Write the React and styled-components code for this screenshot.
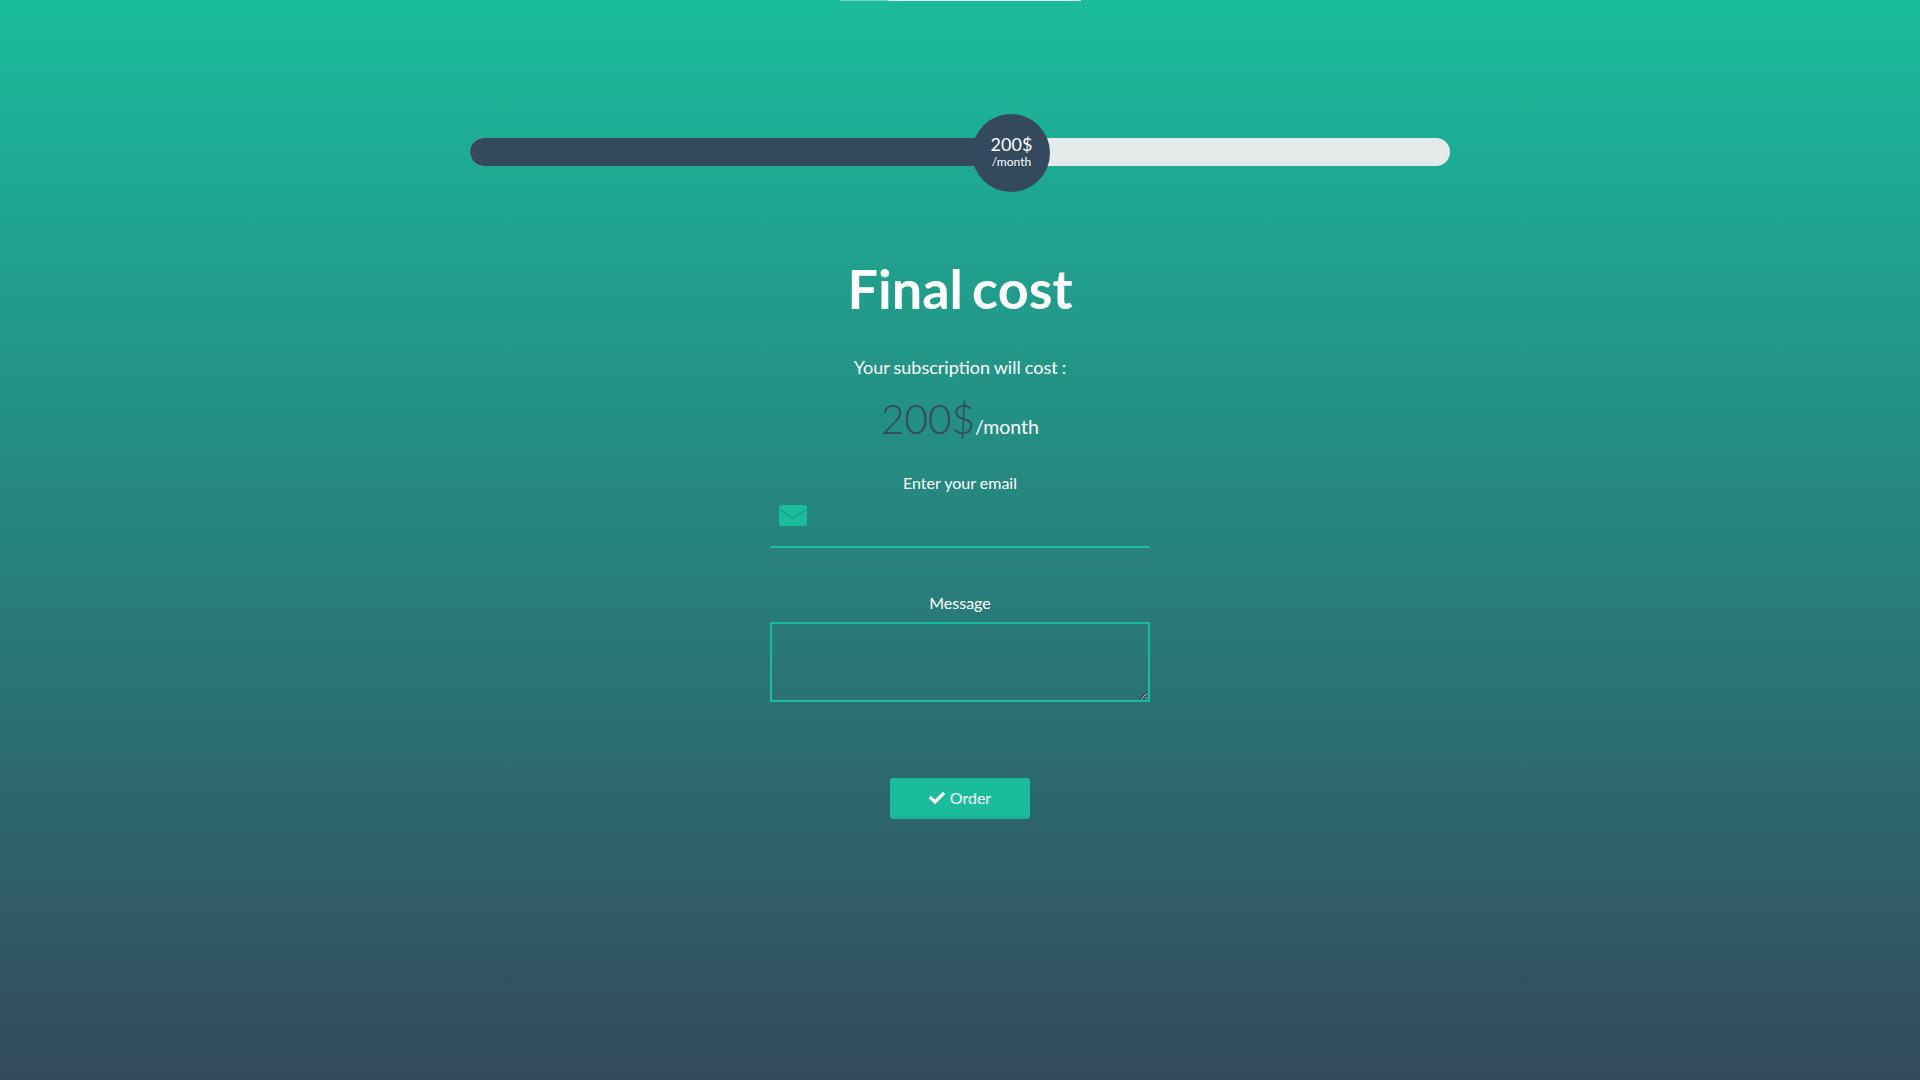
import React from "react";
import styled, { createGlobalStyle } from "styled-components";
import { FaCheck } from "react-icons/fa";

const Global = createGlobalStyle`
  html, body { margin: 0; padding: 0; height: 100%; }
  body { font-family: Lato, "Open Sans", sans-serif; color: #fff; }
  * { box-sizing: border-box; }
`;

const Page = styled.main`
  height: 1080px;
  overflow: hidden;
  background: linear-gradient(180deg, #1abc9c 0%, #34495e 100%);
  display: flex;
  flex-direction: column;
  align-items: center;
`;

const TopRule = styled.div`
  width: 241px;
  height: 1px;
  display: flex;
`;

const TopRuleDone = styled.span`
  width: 48px;
  background: rgba(255, 255, 255, 0.4);
`;

const TopRuleRest = styled.span`
  flex: 1;
  background: #e6fbf6;
`;

const SliderBlock = styled.section`
  width: 980px;
  margin-top: 137px;
  position: relative;
`;

const Track = styled.div`
  height: 28px;
  border-radius: 14px;
  background: #e4e9ea;
  overflow: hidden;
`;

const Fill = styled.div`
  height: 100%;
  background: #34495e;
`;

const Thumb = styled.div`
  position: absolute;
  top: -24px;
  width: 78px;
  height: 78px;
  margin-left: -38.5px;
  border-radius: 50%;
  background: #34495e;
  display: flex;
  flex-direction: column;
  align-items: center;
  justify-content: center;
`;

const ThumbPrice = styled.span`
  font-size: 18px;
  line-height: 20px;
  margin-top: -3px;
`;

const ThumbUnit = styled.span`
  font-size: 12px;
  line-height: 15px;
`;

const Title = styled.h1`
  margin: 90px 0 0;
  font-size: 54px;
  line-height: 66px;
  font-weight: 700;
  word-spacing: -4px;
  text-align: center;
`;

const Lead = styled.p`
  margin: 33px 0 0;
  font-size: 18px;
  line-height: 24px;
  word-spacing: -0.5px;
`;

const Price = styled.div`
  margin-top: 14px;
  height: 52px;
  display: flex;
  align-items: baseline;
`;

const Amount = styled.span`
  font-size: 40.5px;
  line-height: 52px;
  font-weight: 300;
  color: #34495e;
`;

const Unit = styled.span`
  font-size: 19.5px;
`;

const Form = styled.form`
  width: 380px;
  display: flex;
  flex-direction: column;
  align-items: center;
  margin-top: 27px;
`;

const FieldLabel = styled.label`
  font-size: 16px;
  line-height: 22px;
  text-align: center;
`;

const EmailField = styled.div`
  width: 100%;
  height: 52px;
  margin-top: 2px;
  padding: 0 9px;
  display: flex;
  align-items: center;
  gap: 12px;
  border-bottom: 2px solid #1abc9c;
`;

const EnvelopeIcon = styled.svg`
  width: 28px;
  height: 22px;
  flex: none;
  margin-top: -11px;
`;

const EmailInput = styled.input`
  flex: 1;
  min-width: 0;
  height: 100%;
  border: 0;
  outline: 0;
  background: transparent;
  color: #fff;
  font: inherit;
`;

const MessageLabel = styled(FieldLabel)`
  margin-top: 44px;
`;

const MessageBox = styled.textarea`
  display: block;
  width: 100%;
  height: 80px;
  margin-top: 8px;
  border: 2px solid #1abc9c;
  border-radius: 0;
  outline: 0;
  background: transparent;
  color: #fff;
  font: inherit;
  resize: both;
`;

const OrderButton = styled.button`
  width: 140px;
  height: 41px;
  margin-top: 76px;
  border: 0;
  border-bottom: 3px solid #1ab093;
  border-radius: 3px;
  background: #1abc9c;
  color: #fff;
  font-family: inherit;
  font-size: 16px;
  display: flex;
  align-items: center;
  justify-content: center;
  gap: 5px;
`;

const CheckIcon = styled(FaCheck)`
  width: 16px;
  height: 16px;
  margin-top: 2px;
`;

const VALUE_RATIO = 0.552;

export default function App() {
  const percent = `${VALUE_RATIO * 100}%`;
  return (
    <>
      <Global />
      <Page>
        <TopRule>
          <TopRuleDone />
          <TopRuleRest />
        </TopRule>
        <SliderBlock>
          <Track>
            <Fill style={{ width: percent }} />
          </Track>
          <Thumb style={{ left: percent }}>
            <ThumbPrice>200$</ThumbPrice>
            <ThumbUnit>/month</ThumbUnit>
          </Thumb>
        </SliderBlock>
        <Title>Final cost</Title>
        <Lead>Your subscription will cost :</Lead>
        <Price>
          <Amount>200$</Amount>
          <Unit>/month</Unit>
        </Price>
        <Form onSubmit={(e) => e.preventDefault()}>
          <FieldLabel htmlFor="email">Enter your email</FieldLabel>
          <EmailField>
            <EnvelopeIcon viewBox="0 0 28 22" aria-hidden="true">
              <rect width="28" height="21" rx="2.5" fill="#1abc9c" />
              <path d="M1 4.5 L14 13.5 L27 4.5" fill="none" stroke="#179e85" strokeWidth="1.4" />
            </EnvelopeIcon>
            <EmailInput id="email" type="email" />
          </EmailField>
          <MessageLabel htmlFor="message">Message</MessageLabel>
          <MessageBox id="message" />
          <OrderButton type="submit">
            <CheckIcon />
            Order
          </OrderButton>
        </Form>
      </Page>
    </>
  );
}
